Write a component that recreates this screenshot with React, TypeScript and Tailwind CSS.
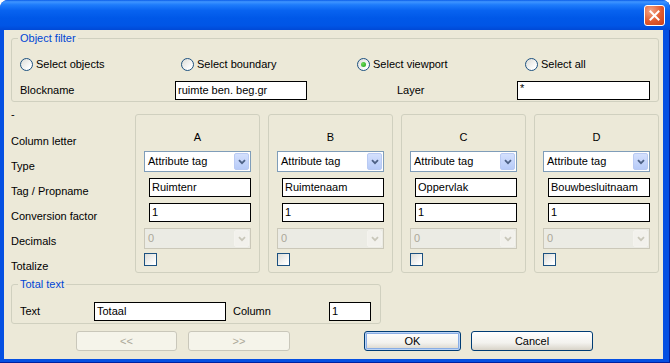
import React from 'react'
import { clsx, type ClassValue } from 'clsx'
import { twMerge } from 'tailwind-merge'

function cn(...inputs: ClassValue[]) {
  return twMerge(clsx(inputs))
}

const columns = [
  { letter: 'A', tag: 'Ruimtenr' },
  { letter: 'B', tag: 'Ruimtenaam' },
  { letter: 'C', tag: 'Oppervlak' },
  { letter: 'D', tag: 'Bouwbesluitnaam' },
]

const rowLabels = ['Column letter', 'Type', 'Tag / Propname', 'Conversion factor', 'Decimals', 'Totalize']

function Radio({ checked }: { checked?: boolean }) {
  return (
    <span className="flex h-[13px] w-[13px] shrink-0 items-center justify-center rounded-full border border-[#1C5180] bg-[linear-gradient(135deg,#DCDCD7,#FFFFFF_80%)]">
      {checked && (
        <span className="h-[5px] w-[5px] rounded-full bg-[radial-gradient(circle_at_35%_35%,#6BDB55,#1F9F1F)]" />
      )}
    </span>
  )
}

function Checkbox() {
  return (
    <span className="block h-[13px] w-[13px] border border-[#1C5180] bg-[linear-gradient(135deg,#DCDCD7,#FFFFFF_85%)]" />
  )
}

function TextBox({ value, className }: { value: string; className?: string }) {
  return (
    <div className={cn('flex h-[19px] items-center border border-black bg-white pl-[2px] leading-[13px]', className)}>
      {value}
    </div>
  )
}

function Chevron({ color }: { color: string }) {
  return (
    <svg width="8" height="6" viewBox="0 0 8 6">
      <path d="M1 1.2 L4 4.2 L7 1.2" stroke={color} strokeWidth="1.8" fill="none" />
    </svg>
  )
}

function Combo({ value, disabled }: { value: string; disabled?: boolean }) {
  return (
    <div
      className={cn(
        'flex h-[21px] w-[107px] items-center border',
        disabled ? 'border-[#CBC8B9] bg-[#EBEBE4]' : 'border-[#7F9DB9] bg-white'
      )}
    >
      <span className={cn('flex-1 pl-[3px] leading-[13px]', disabled ? 'text-[#ACA899]' : 'text-black')}>{value}</span>
      <span
        className={cn(
          'mr-[1px] flex h-[17px] w-[15px] items-center justify-center rounded-[2px] border',
          disabled
            ? 'border-[#F4F3EE] bg-[#F2F1EC]'
            : 'border-[#B9CAF3] bg-[linear-gradient(180deg,#D4E0FD,#B7CBF8)]'
        )}
      >
        <Chevron color={disabled ? '#C9C7BA' : '#4D6185'} />
      </span>
    </div>
  )
}

function XPButton({
  children,
  className,
  disabled,
  primary,
}: {
  children: React.ReactNode
  className?: string
  disabled?: boolean
  primary?: boolean
}) {
  return (
    <div
      className={cn(
        'flex h-[20px] items-center justify-center rounded-[3px] border leading-[13px]',
        disabled
          ? 'border-[#C9C7BA] bg-[#F5F4EA] text-[#ACA899]'
          : 'border-[#003C74] bg-[linear-gradient(180deg,#FFFFFF,#F3F2EE_60%,#D8D3C8)] text-black',
        primary && 'shadow-[inset_0_0_0_1px_#BCD4F6,inset_0_0_0_2px_#89ADE4]',
        className
      )}
    >
      {children}
    </div>
  )
}

function ColumnBox({ letter, tag }: { letter: string; tag: string }) {
  return (
    <div className="flex h-[159px] w-[125px] flex-col rounded-[3px] border border-[#D0D0BF] px-[8px] pt-[16px]">
      <div className="text-center leading-[13px]">{letter}</div>
      <div className="mt-[7px]">
        <Combo value="Attribute tag" />
      </div>
      <TextBox value={tag} className="ml-[5px] mt-[6px] w-[102px]" />
      <TextBox value="1" className="ml-[5px] mt-[6px] w-[102px]" />
      <div className="mt-[6px]">
        <Combo value="0" disabled />
      </div>
      <div className="mt-[4px]">
        <Checkbox />
      </div>
    </div>
  )
}

export default function App() {
  return (
    <div className="h-[363px] w-[670px] bg-white font-['Liberation_Sans',Arial,sans-serif] text-[11px] text-black">
      <div className="flex h-full flex-col rounded-t-[8px] bg-[#0550E2] shadow-[inset_-1px_-1px_0_#00209E]">
        {/* title bar */}
        <div className="flex h-[30px] justify-end rounded-t-[8px] bg-[linear-gradient(180deg,#0A5CE8_0%,#3F95FF_6%,#1E7CFB_16%,#0863F0_35%,#0058E8_60%,#0055E6_85%,#0049D6_100%)] pr-[5px] pt-[5px]">
          <div className="flex h-[21px] w-[21px] items-center justify-center rounded-[3px] border border-white bg-[radial-gradient(circle_at_30%_25%,#F3A587,#E15A2E_55%,#C9401A)]">
            <svg width="11" height="11" viewBox="0 0 11 11">
              <path d="M1.5 1.5 L9.5 9.5 M9.5 1.5 L1.5 9.5" stroke="white" strokeWidth="2" strokeLinecap="square" />
            </svg>
          </div>
        </div>

        {/* body */}
        <div className="mb-[4px] ml-[4px] mr-[7px] flex flex-1 flex-col bg-[#ECE9D8] pl-[7px] pt-[2px]">
          <fieldset className="w-[648px] rounded-[3px] border border-[#D0D0BF] pb-[1px] pl-[6px] pt-[13px]">
            <legend className="px-[2px] leading-[13px] text-[#0046D5]">Object filter</legend>
            <div className="pl-[2px]">
              <div className="grid grid-cols-[161px_176px_168px_1fr] leading-[13px]">
                <label className="flex items-center gap-[3px]">
                  <Radio /> Select objects
                </label>
                <label className="flex items-center gap-[3px]">
                  <Radio /> Select boundary
                </label>
                <label className="flex items-center gap-[3px]">
                  <Radio checked /> Select viewport
                </label>
                <label className="flex items-center gap-[3px]">
                  <Radio /> Select all
                </label>
              </div>
              <div className="mt-[10px] flex h-[19px] items-center">
                <span className="w-[155px]">Blockname</span>
                <TextBox value="ruimte ben. beg.gr" className="w-[132px]" />
                <span className="ml-[90px] w-[120px]">Layer</span>
                <TextBox value="*" className="w-[133px] items-start" />
              </div>
            </div>
          </fieldset>

          <div className="flex">
            <div className="w-[124px] shrink-0">
              <div className="mt-[6px] leading-[13px]">-</div>
              <div className="mt-[8px]">
                {rowLabels.map((l) => (
                  <div key={l} className="flex h-[25px] items-center">
                    {l}
                  </div>
                ))}
              </div>
            </div>
            <div className="mt-[12px] flex gap-[8px]">
              {columns.map((c) => (
                <ColumnBox key={c.letter} letter={c.letter} tag={c.tag} />
              ))}
            </div>
          </div>

          <fieldset className="-mt-[1px] w-[370px] rounded-[3px] border border-[#D0D0BF] pb-[2px] pl-[6px] pt-[11px]">
            <legend className="px-[2px] leading-[13px] text-[#0046D5]">Total text</legend>
            <div className="flex h-[19px] items-center pl-[2px]">
              <span className="w-[74px]">Text</span>
              <TextBox value="Totaal" className="w-[132px]" />
              <span className="ml-[7px] w-[96px]">Column</span>
              <TextBox value="1" className="w-[42px]" />
            </div>
          </fieldset>

          <div className="mt-[7px] flex">
            <XPButton disabled className="ml-[65px] w-[101px]">
              &lt;&lt;
            </XPButton>
            <XPButton disabled className="ml-[11px] w-[102px]">
              &gt;&gt;
            </XPButton>
            <XPButton primary className="ml-[74px] w-[97px]">
              OK
            </XPButton>
            <XPButton className="ml-[10px] w-[122px]">Cancel</XPButton>
          </div>
        </div>
      </div>
    </div>
  )
}
